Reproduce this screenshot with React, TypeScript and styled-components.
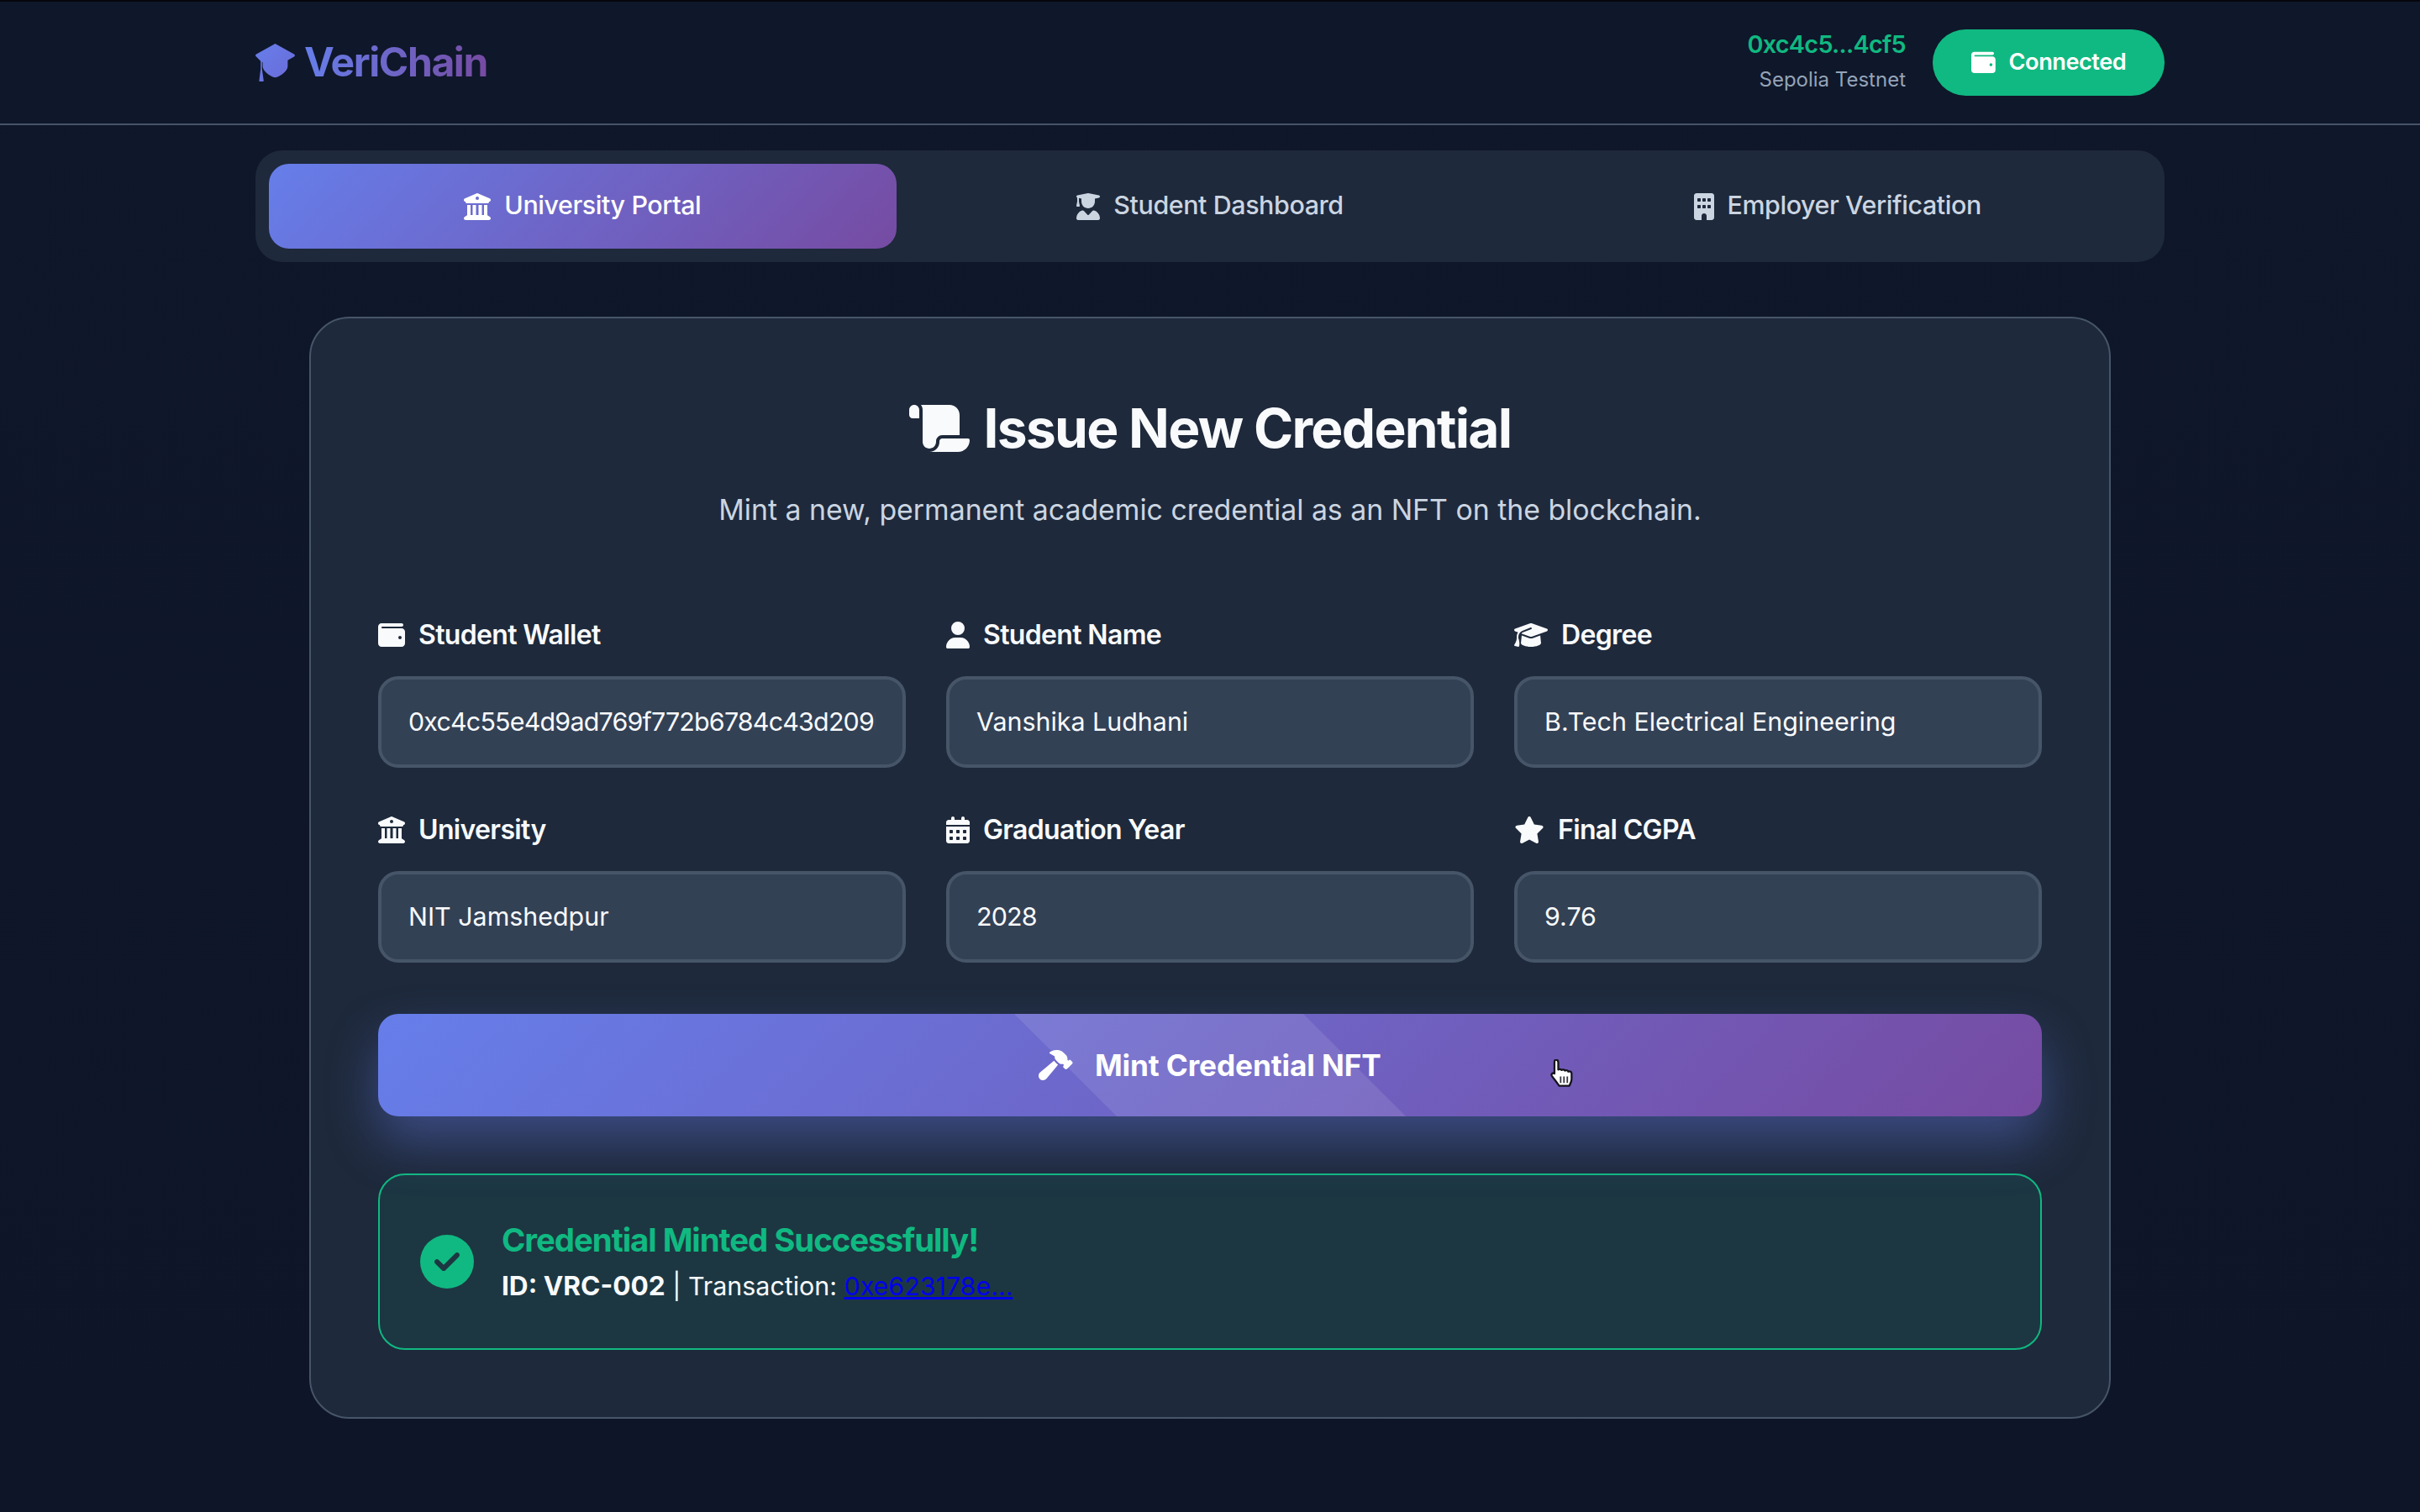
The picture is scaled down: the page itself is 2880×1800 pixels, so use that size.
import styled, {createGlobalStyle} from 'styled-components'
import {
  FaBuilding,
  FaBuildingColumns,
  FaCalendarDays,
  FaCircleCheck,
  FaGraduationCap,
  FaHammer,
  FaScroll,
  FaStar,
  FaUser,
  FaUserGraduate,
  FaWallet,
} from 'react-icons/fa6'

const GlobalStyle = createGlobalStyle`
  * { box-sizing: border-box; }
  html, body { margin: 0; padding: 0; }
  body {
    min-height: 1800px;
    background: linear-gradient(180deg, #0f172a 0%, #0e1529 100%);
    color: #f8fafc;
    font-family: Inter, "Liberation Sans", sans-serif;
    font-size: 32px;
    line-height: 1.6;
  }
`

const LogoCap = () => (
  <LogoIcon viewBox="0 0 47 45">
    <defs>
      <linearGradient id="capFill" x1="0" y1="0" x2="1" y2="1">
        <stop offset="0" stopColor="#667eea" />
        <stop offset="1" stopColor="#6b6bd8" />
      </linearGradient>
    </defs>
    <path
      fill="url(#capFill)"
      d="M23.5 0 46 12.6c1.3.8 1.3 2 0 2.8l-7.6 4.3v7.2c0 5.5-8.6 12.2-14.9 13.4C17.2 39.100 8.600 32.400 8.600 26.900v-4.700L7.800 21.700v8.300l2 14.200c.1.500-.3.800-.8.800H5.200c-.5 0-.9-.3-.8-.8l1.800-14.200v-9.200L1 15.400c-1.300-.8-1.300-2 0-2.800Z"
    />
  </LogoIcon>
)

const HandCursor = () => (
  <Cursor viewBox="1 1 23 30">
    <path
      fill="#fff"
      stroke="#15131c"
      strokeWidth="2"
      strokeLinejoin="round"
      d="M6 1.500c1.800 0 2.500 1.300 2.500 2.800V12c1-.8 2.800-.8 3.500.4 1-.8 2.900-.7 3.500.6 1.200-.8 3.100-.4 3.500 1 1-.7 3.500-.3 3.500 2v6c0 3-1.500 5-2.500 7H9.500C7.500 26 3.500 21 1.800 18.500.7 16.800 2.600 14.700 4.500 16V4.300C4.500 2.800 4.800 1.500 6 1.500Z"
    />
    <path stroke="#3a3842" strokeWidth="1.600" d="M11 19v7M14.500 19v7M18 19v7" />
  </Cursor>
)

const App = () => {
  return (
    <>
      <GlobalStyle />
      <Header>
        <HeaderInner>
          <Logo>
            <LogoCap />
            <LogoText>VeriChain</LogoText>
          </Logo>
          <Account>
            <AccountInfo>
              <Address>0xc4c5...4cf5</Address>
              <Network>Sepolia Testnet</Network>
            </AccountInfo>
            <ConnectButton>
              <Icon $w={28.8} $h={28.8}><FaWallet /></Icon>
              <span>Connected</span>
            </ConnectButton>
          </Account>
        </HeaderInner>
      </Header>

      <Main>
        <Tabs>
          <Tab $active>
            <Icon $w={32} $h={32}><FaBuildingColumns /></Icon>
            <span>University Portal</span>
          </Tab>
          <Tab>
            <Icon $w={28} $h={32}><FaUserGraduate /></Icon>
            <span>Student Dashboard</span>
          </Tab>
          <Tab>
            <Icon $w={24} $h={32}><FaBuilding /></Icon>
            <span>Employer Verification</span>
          </Tab>
        </Tabs>

        <Card>
          <Title>
            <Icon $w={72} $h={64}><FaScroll /></Icon>
            Issue New Credential
          </Title>
          <Subtitle>Mint a new, permanent academic credential as an NFT on the blockchain.</Subtitle>

          <FormGrid>
            <Field>
              <Label><Icon $w={32} $h={32}><FaWallet /></Icon>Student Wallet</Label>
              <Input $digits readOnly value="0xc4c55e4d9ad769f772b6784c43d209b1a7e04cf5" />
            </Field>
            <Field>
              <Label><Icon $w={28} $h={32}><FaUser /></Icon>Student Name</Label>
              <Input readOnly value="Vanshika Ludhani" />
            </Field>
            <Field>
              <Label><Icon $w={40} $h={32}><FaGraduationCap /></Icon>Degree</Label>
              <Input readOnly value="B.Tech Electrical Engineering" />
            </Field>
            <Field>
              <Label><Icon $w={32} $h={32}><FaBuildingColumns /></Icon>University</Label>
              <Input readOnly value="NIT Jamshedpur" />
            </Field>
            <Field>
              <Label><Icon $w={28} $h={32}><FaCalendarDays /></Icon>Graduation Year</Label>
              <Input $digits readOnly value="2028" />
            </Field>
            <Field>
              <Label><Icon $w={36} $h={32}><FaStar /></Icon>Final CGPA</Label>
              <Input readOnly value="9.76" />
            </Field>
          </FormGrid>

          <MintButton>
            <Icon $w={40.5} $h={36}><FaHammer /></Icon>
            Mint Credential NFT
            <HandCursor />
          </MintButton>

          <Success>
            <Icon $w={64} $h={64} $color="#10b981"><FaCircleCheck /></Icon>
            <div>
              <SuccessTitle>Credential Minted Successfully!</SuccessTitle>
              <SuccessText>
                <strong>ID: VRC-002</strong> | Transaction: <a href="#tx">0xe623178e...</a>
              </SuccessText>
            </div>
          </Success>
        </Card>
      </Main>
    </>
  )
}

export default App

const Icon = styled.span<{$w: number; $h: number; $color?: string}>`
  display: inline-flex;
  flex: none;
  width: ${({$w}) => $w}px;
  height: ${({$h}) => $h}px;
  color: ${({$color}) => $color || 'inherit'};
  svg { width: 100%; height: 100%; display: block; }
`

const Header = styled.header`
  height: 149px;
  background: #0f172a;
  border-top: 2px solid #05070d;
  border-bottom: 2px solid #475569;
`

const HeaderInner = styled.div`
  width: 2272px;
  height: 100%;
  margin: 0 auto;
  display: flex;
  align-items: center;
  justify-content: space-between;
`

const Logo = styled.div`
  display: flex;
  align-items: center;
  gap: 11px;
`

const LogoIcon = styled.svg`
  width: 47px;
  height: 45px;
`

const LogoText = styled.span`
  font-size: 48px;
  font-weight: 700;
  letter-spacing: -1.4px;
  background: linear-gradient(90deg, #667eea 0%, #764ba2 100%);
  -webkit-background-clip: text;
  background-clip: text;
  color: transparent;
`

const Account = styled.div`
  display: flex;
  align-items: center;
  gap: 32px;
`

const AccountInfo = styled.div`
  display: flex;
  flex-direction: column;
  align-items: flex-end;
`

const Address = styled.span`
  font-size: 28.8px;
  font-weight: 600;
  line-height: 40px;
  letter-spacing: -0.7px;
  color: #10b981;
`

const Network = styled.span`
  font-size: 24px;
  line-height: 44px;
  color: #94a3b8;
`

const ConnectButton = styled.button`
  width: 276px;
  height: 79px;
  border: none;
  border-radius: 40px;
  background: #10b981;
  color: #fff;
  font-family: inherit;
  font-size: 27.2px;
  font-weight: 600;
  letter-spacing: -0.5px;
  display: flex;
  align-items: center;
  justify-content: center;
  gap: 16px;
  span:last-child { margin-bottom: 3px; }
`

const Main = styled.main`
  width: 2272px;
  margin: 0 auto;
  padding-top: 30px;
`

const Tabs = styled.nav`
  display: grid;
  grid-template-columns: repeat(3, 1fr);
  padding: 16px;
  border-radius: 32px;
  background: #1e293b;
`

const Tab = styled.button<{$active?: boolean}>`
  height: 101px;
  border: none;
  border-radius: 24px;
  background: ${({$active}) => ($active ? 'linear-gradient(135deg, #667eea 0%, #764ba2 100%)' : 'transparent')};
  color: ${({$active}) => ($active ? '#fff' : '#cbd5e1')};
  font-family: inherit;
  font-size: 30.4px;
  font-weight: 500;
  letter-spacing: -0.4px;
  display: flex;
  align-items: center;
  justify-content: center;
  gap: 16px;
  span:last-child { margin-bottom: 3px; }
`

const Card = styled.section`
  margin: 65px 64px 0;
  padding: 80px;
  border: 2px solid #475569;
  border-radius: 48px;
  background: #1e293b;
`

const Title = styled.h2`
  margin: 0 0 18px;
  font-size: 64px;
  font-weight: 700;
  line-height: 102px;
  letter-spacing: -1.7px;
  display: flex;
  align-items: center;
  justify-content: center;
  gap: 17px;
`

const Subtitle = styled.p`
  margin: 0 0 95px;
  font-size: 33.8px;
  line-height: 56px;
  text-align: center;
  color: #cbd5e1;
`

const FormGrid = styled.div`
  display: grid;
  grid-template-columns: repeat(3, 1fr);
  gap: 48px;
  margin-bottom: 61px;
`

const Field = styled.div`
  min-width: 0;
`

const Label = styled.label`
  display: flex;
  align-items: center;
  gap: 16px;
  margin-bottom: 24px;
  font-size: 32px;
  font-weight: 600;
  letter-spacing: -0.65px;
  line-height: 51px;
`

const Input = styled.input<{$digits?: boolean}>`
  display: block;
  width: 100%;
  height: 109px;
  padding: 0 32px 2px;
  border: 4px solid #475569;
  border-radius: 24px;
  outline: none;
  background: #334155;
  color: #f8fafc;
  font-family: inherit;
  font-size: 30.4px;
  letter-spacing: ${({$digits}) => ($digits ? '-0.8px' : '0')};
`

const MintButton = styled.button`
  position: relative;
  width: 100%;
  height: 122px;
  border: none;
  border-radius: 24px;
  background: linear-gradient(135deg, #667eea 0%, #764ba2 100%);
  box-shadow: 0 30px 60px rgba(102, 126, 234, 0.4);
  color: #fff;
  font-family: inherit;
  font-size: 35.2px;
  font-weight: 700;
  letter-spacing: -0.1px;
  display: flex;
  align-items: center;
  justify-content: center;
  gap: 26px;
  &::before {
    content: '';
    position: absolute;
    top: 0;
    bottom: 0;
    left: 818px;
    width: 344px;
    background: rgba(255, 255, 255, 0.1);
    transform: skewX(45deg);
  }
`

const Cursor = styled.svg`
  position: absolute;
  left: 1394px;
  top: 54px;
  width: 30px;
  height: 34px;
`

const Success = styled.div`
  margin-top: 68px;
  height: 210px;
  padding: 0 48px;
  border: 2px solid #10b981;
  border-radius: 32px;
  background: rgba(16, 185, 129, 0.1);
  display: flex;
  align-items: center;
  gap: 33px;
`

const SuccessTitle = styled.div`
  font-size: 38.4px;
  font-weight: 700;
  line-height: 54px;
  letter-spacing: -1.05px;
  color: #10b981;
  padding-top: 2px;
`

const SuccessText = styled.div`
  margin-top: 2px;
  font-size: 30.4px;
  line-height: 51px;
  strong { font-size: 31.6px; }
  a { color: #0000ee; }
`
